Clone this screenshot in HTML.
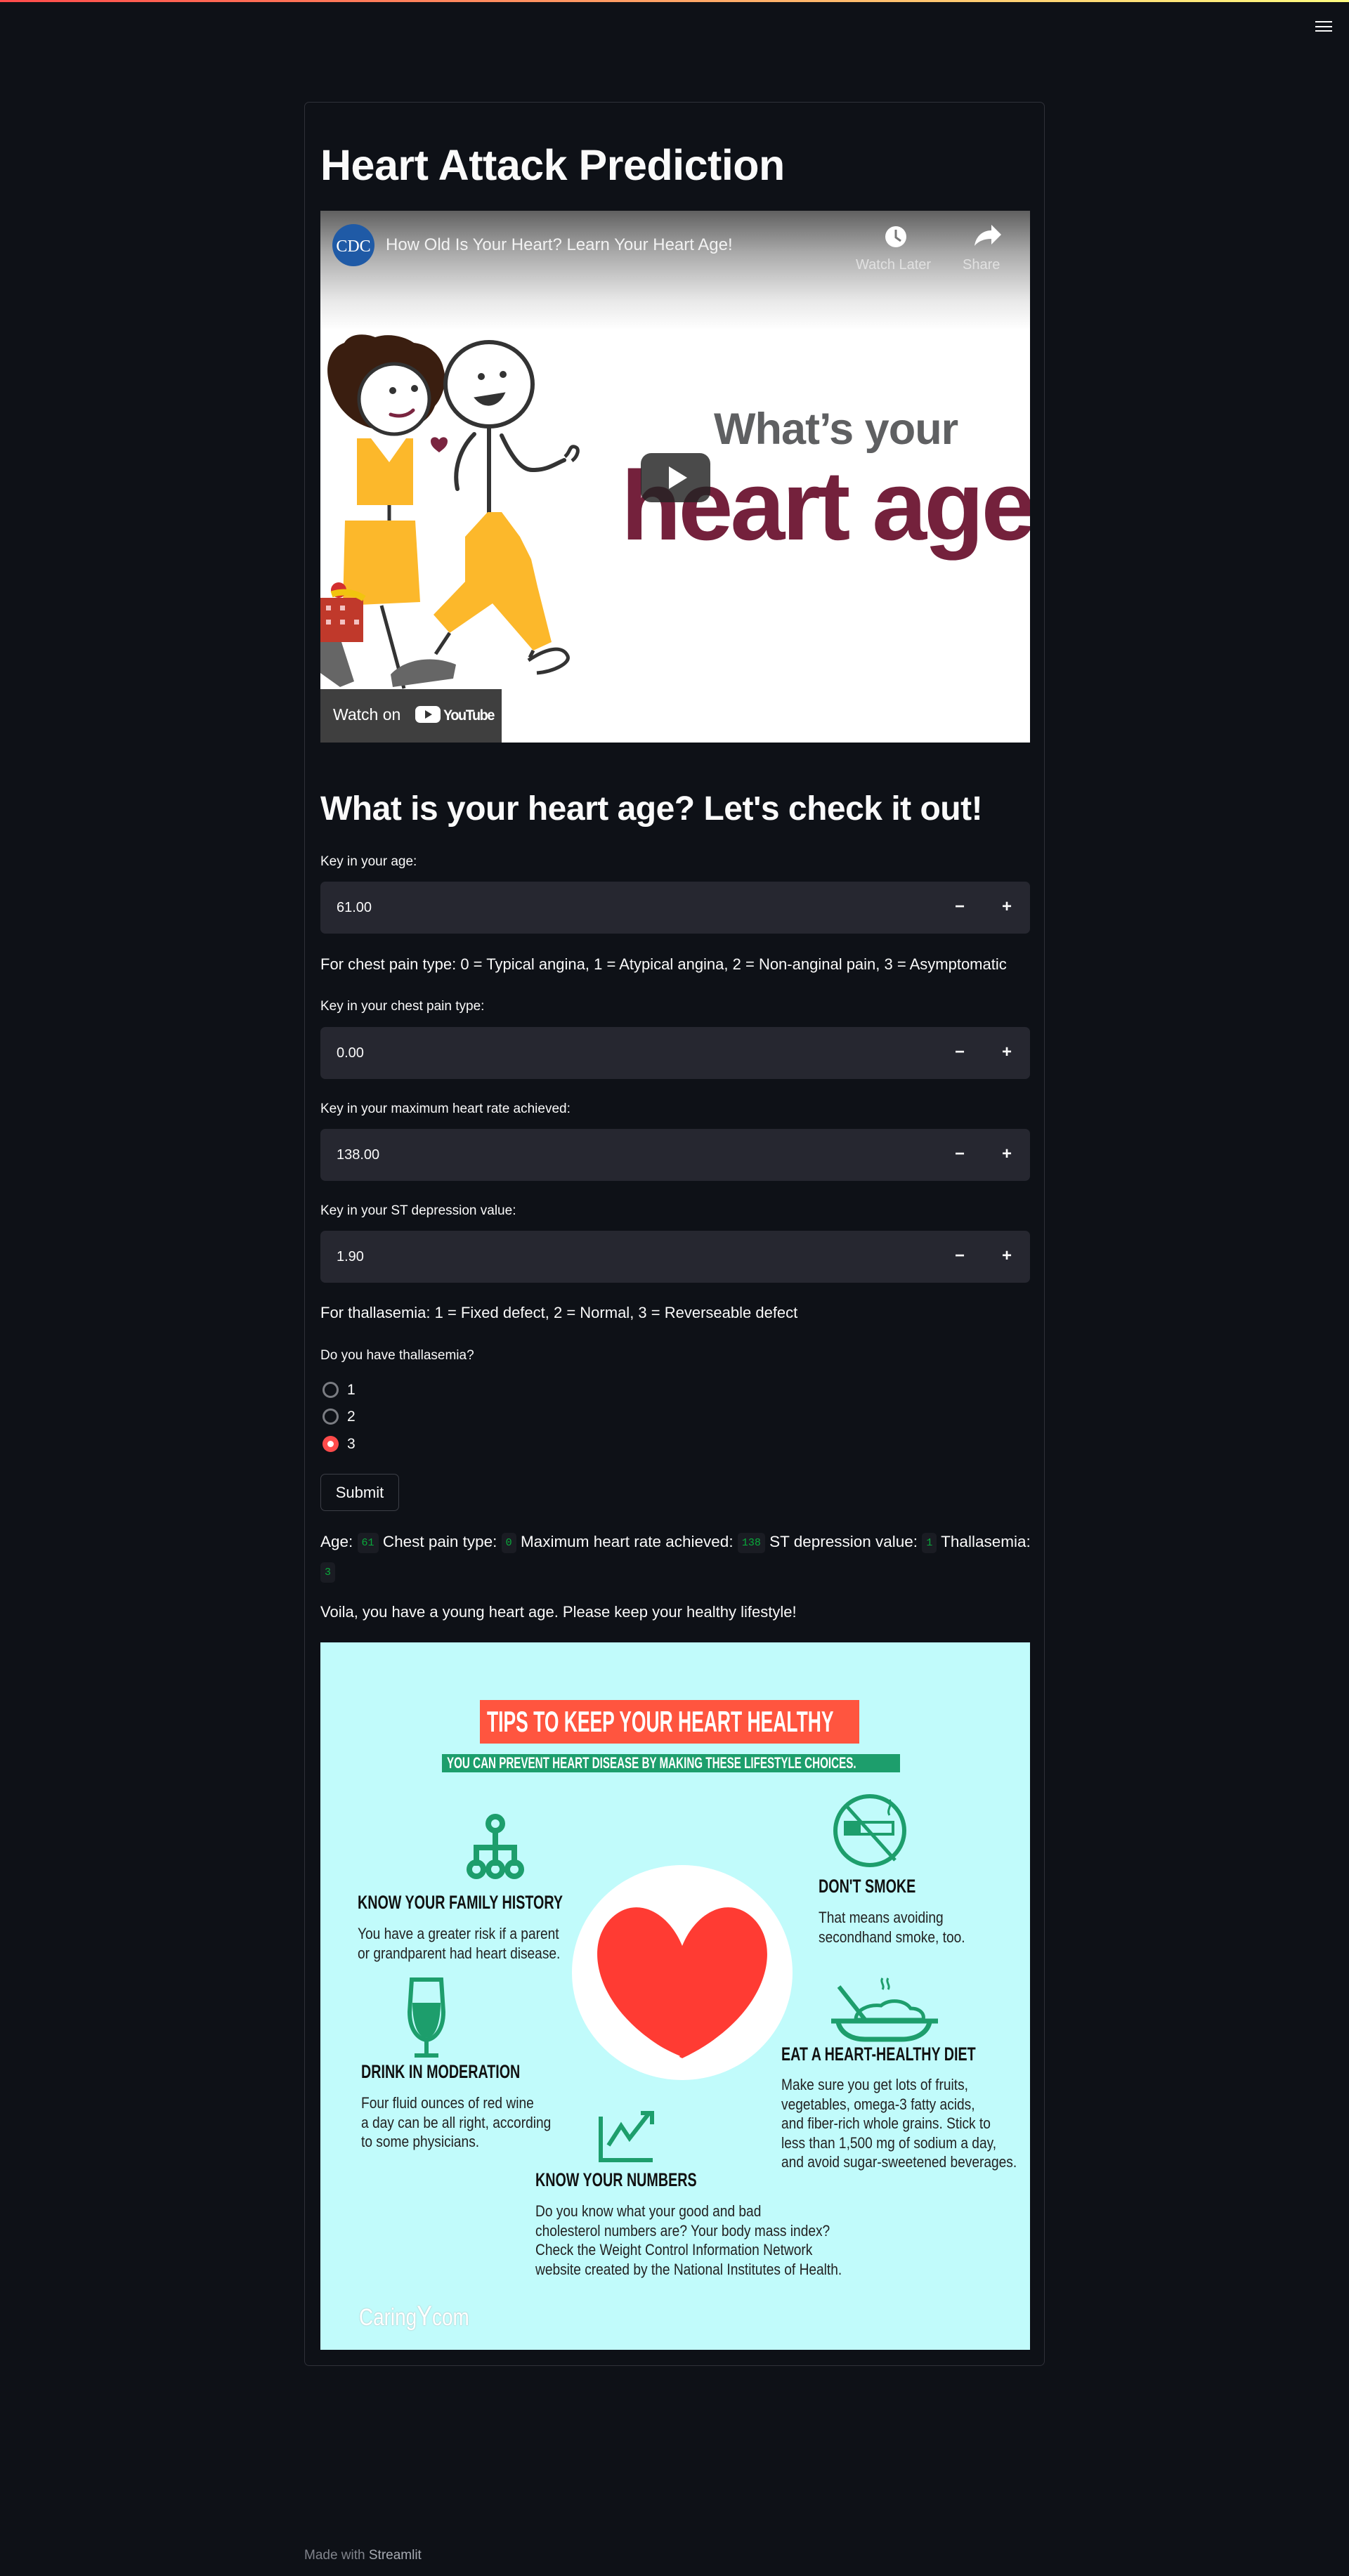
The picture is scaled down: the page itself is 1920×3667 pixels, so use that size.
<!DOCTYPE html>
<html><head><meta charset="utf-8">
<style>
*{margin:0;padding:0;box-sizing:border-box}
html,body{width:1920px;height:3667px;background:#0e1117;overflow:hidden}
body{position:relative;font-family:"Liberation Sans",sans-serif;color:#fafafa}
.a{position:absolute;white-space:nowrap}
.lbl{font-size:19px;color:#fafafa;line-height:24px}
.p{font-size:22px;line-height:28px}
.inp{position:absolute;left:456px;width:1010px;height:74px;background:#262730;border-radius:7px}
.inp .v{position:absolute;left:23px;top:0;line-height:74px;font-size:20px}
.inp .m,.inp .pl{position:absolute;top:0;line-height:72px;font-size:24px;font-weight:bold;width:40px;text-align:center}
.inp .m{left:890px}.inp .pl{left:957px}
.code{font-family:"Liberation Mono",monospace;font-size:15px;color:#09ab3b;background:#1a1c23;border-radius:5px;padding:6px 6px;vertical-align:2px}
.c{display:inline-block;transform-origin:0 0}
.ih{position:absolute;font-weight:bold;font-size:27px;line-height:27px;color:#111;white-space:nowrap}
.ih span{display:inline-block;transform:scaleX(0.73);transform-origin:0 0}
.it{position:absolute;font-size:22px;line-height:27.5px;color:#222;white-space:nowrap;transform:scaleX(0.87);transform-origin:0 0}
</style></head><body>
<div class="a" style="left:0;top:0;width:1920px;height:3px;background:linear-gradient(90deg,#ff4b4b,#fffd80)"></div>
<div class="a" style="left:1872px;top:30px;width:24px;height:2px;background:#fafafa"></div>
<div class="a" style="left:1872px;top:37px;width:24px;height:2px;background:#fafafa"></div>
<div class="a" style="left:1872px;top:43px;width:24px;height:2px;background:#fafafa"></div>

<div class="a" style="left:433px;top:145px;width:1054px;height:3223px;border:1px solid #2f3139;border-radius:7px"></div>

<div class="a" style="left:456px;top:200px;font-size:61px;font-weight:bold;letter-spacing:-0.5px">Heart Attack Prediction</div>

<!-- video -->
<div class="a" style="left:456px;top:300px;width:1010px;height:757px;background:#fff;overflow:hidden">
<div class="a" style="left:0;top:0;width:1010px;height:170px;background:linear-gradient(180deg,#606060 0%,#a9a9a9 35%,#e8e8e8 75%,#fff 100%)"></div>
<svg class="a" style="left:0;top:0" width="1010" height="757" viewBox="0 0 1010 757">
<circle cx="47" cy="49" r="30" fill="#1f5aa6"/>
<text x="47" y="58" text-anchor="middle" font-family="Liberation Serif" font-size="24" fill="#fff">CDC</text>
<circle cx="819" cy="37" r="15" fill="#fff"/><path d="M819 27v11l7 5" stroke="#777" stroke-width="3" fill="none"/>
<path d="M931 50c2-14 12-22 24-22v-8l14 14-14 14v-8c-10 0-18 3-24 10z" fill="#fff"/>
<!-- woman hair -->
<path d="M14 250c-10-30 0-55 20-62 8-14 30-14 44-8 18-6 40-2 55 8 20 2 38 16 42 36 6 18 0 40-12 54-8 22-30 34-60 34-40 4-78-20-89-62z" fill="#3a1e10"/>
<circle cx="105" cy="268" r="50" fill="#fff" stroke="#333" stroke-width="5"/>
<circle cx="103" cy="256" r="5" fill="#333"/><circle cx="134" cy="253" r="5" fill="#333"/>
<path d="M100 290c12 4 24 2 32-6" stroke="#7a2540" stroke-width="5" fill="none" stroke-linecap="round"/>
<!-- man head -->
<ellipse cx="240" cy="247" rx="62" ry="60" fill="#fff" stroke="#333" stroke-width="6"/>
<circle cx="229" cy="236" r="5" fill="#333"/><circle cx="260" cy="233" r="5" fill="#333"/>
<path d="M222 267c12 14 30 10 38-6z" stroke="#333" stroke-width="4" fill="#333"/>
<line x1="240" y1="307" x2="240" y2="430" stroke="#333" stroke-width="6"/>
<path d="M219 318c-20 20-30 50-24 78M258 320c14 30 28 50 45 49 20 0 30-8 44-14" stroke="#333" stroke-width="6" fill="none" stroke-linecap="round"/>
<path d="M348 350c8-6 6-16 14-14 8 2 4 14-4 20" stroke="#333" stroke-width="5" fill="none"/>
<path d="M169 344c-8-6-12-10-12-16 0-6 8-8 12-2 4-6 12-4 12 2 0 6-4 10-12 16z" fill="#7a2540"/>
<!-- woman dress -->
<path d="M52 324l20 0 26 34 24-34 10 0 0 95-80 0z" fill="#fcb82b"/>
<line x1="98" y1="419" x2="98" y2="441" stroke="#333" stroke-width="5"/>
<path d="M35 441l100 0 7 116-110 5z" fill="#fcb82b"/>
<path d="M87 562l32 118M55 562l-40 60" stroke="#333" stroke-width="5" fill="none"/>
<!-- man pants -->
<path d="M206 464l32-35 20 0 26 35 16 32 9 39 20 79-26 12-58-67-61 42-23-26 45-47z" fill="#fcb82b"/>
<path d="M184 601l-20 30M303 626l-5 10" stroke="#333" stroke-width="5"/>
<!-- basket -->
<rect x="0" y="551" width="61" height="63" fill="#c0392b"/>
<g fill="#f3c1c1"><rect x="8" y="562" width="7" height="7"/><rect x="28" y="562" width="7" height="7"/><rect x="8" y="582" width="7" height="7"/><rect x="28" y="582" width="7" height="7"/><rect x="48" y="582" width="7" height="7"/></g>
<circle cx="26" cy="540" r="11" fill="#d32f2f"/><path d="M16 546c18-6 34-2 46 6" stroke="#f1c40f" stroke-width="9" fill="none"/>
<!-- shoes -->
<path d="M0 614l30 0 18 56-20 8-28-20z" fill="#666"/>
<path d="M100 660c20-22 60-28 93-14l-4 20-86 12z" fill="#666"/>
<path d="M296 640c30-20 50-20 56-6 4 10-20 22-44 24" stroke="#333" stroke-width="5" fill="none"/>
<text x="560" y="332" font-family="Liberation Sans" font-weight="bold" font-size="63" fill="#5f6062" letter-spacing="-1">What’s your</text>
<text x="428" y="468" font-family="Liberation Sans" font-weight="bold" font-size="140" fill="#74213c" letter-spacing="-4">heart age</text>
<rect x="456" y="345" width="99" height="70" rx="15" fill="#222" opacity="0.82"/>
<path d="M496 364l26 16-26 16z" fill="#fff"/>
</svg>
<div class="a" style="left:0;top:681px;width:258px;height:76px;background:#3f3f3f"></div>
<div class="a" style="left:18px;top:681px;line-height:72px;font-size:23px;color:#fff">Watch on</div>
<svg class="a" style="left:135px;top:703px" width="120" height="28" viewBox="0 0 120 28"><rect x="0" y="2" width="36" height="24" rx="7" fill="#fff"/><path d="M14 8l10 6-10 6z" fill="#333"/><text x="40" y="22" font-family="Liberation Sans" font-weight="bold" font-size="21" fill="#fff" letter-spacing="-1.5" textLength="72" lengthAdjust="spacingAndGlyphs">YouTube</text></svg>
</div>
<div class="a" style="left:549px;top:335px;font-size:24px;color:#f2f2f2">How Old Is Your Heart? Learn Your Heart Age!</div>
<div class="a" style="left:1218px;top:366px;font-size:20px;color:#eee;opacity:.75">Watch Later</div>
<div class="a" style="left:1370px;top:366px;font-size:20px;color:#eee;opacity:.75">Share</div>

<div class="a" style="left:456px;top:1124px;font-size:48px;font-weight:bold;letter-spacing:-0.5px">What is your heart age? Let's check it out!</div>

<div class="a lbl" style="left:456px;top:1215px">Key in your age:</div>
<div class="inp" style="top:1255px"><div class="v">61.00</div><div class="m">−</div><div class="pl">+</div></div>
<div class="a p" style="left:456px;top:1359px">For chest pain type: 0 = Typical angina, 1 = Atypical angina, 2 = Non-anginal pain, 3 = Asymptomatic</div>
<div class="a lbl" style="left:456px;top:1421px">Key in your chest pain type:</div>
<div class="inp" style="top:1462px"><div class="v">0.00</div><div class="m">−</div><div class="pl">+</div></div>
<div class="a lbl" style="left:456px;top:1567px">Key in your maximum heart rate achieved:</div>
<div class="inp" style="top:1607px"><div class="v">138.00</div><div class="m">−</div><div class="pl">+</div></div>
<div class="a lbl" style="left:456px;top:1712px">Key in your ST depression value:</div>
<div class="inp" style="top:1752px"><div class="v">1.90</div><div class="m">−</div><div class="pl">+</div></div>
<div class="a p" style="left:456px;top:1855px">For thallasemia: 1 = Fixed defect, 2 = Normal, 3 = Reverseable defect</div>
<div class="a lbl" style="left:456px;top:1918px">Do you have thallasemia?</div>
<div class="a" style="left:459px;top:1967px;width:23px;height:23px;border:3px solid #7a7c82;border-radius:50%"></div>
<div class="a p" style="left:494px;top:1965px;font-size:21px">1</div>
<div class="a" style="left:459px;top:2005px;width:23px;height:23px;border:3px solid #7a7c82;border-radius:50%"></div>
<div class="a p" style="left:494px;top:2003px;font-size:21px">2</div>
<div class="a" style="left:459px;top:2044px;width:23px;height:23px;background:#ff4b4b;border-radius:50%"><div style="position:absolute;left:7px;top:7px;width:9px;height:9px;background:#fff;border-radius:50%"></div></div>
<div class="a p" style="left:494px;top:2042px;font-size:21px">3</div>
<div class="a" style="left:456px;top:2098px;width:112px;height:53px;border:1px solid #3d3f47;border-radius:7px;font-size:22px;line-height:51px;text-align:center">Submit</div>
<div class="a p" style="left:456px;top:2175px;width:1012px;white-space:normal;line-height:40px;font-size:22.5px">Age: <span class="code">61</span> Chest pain type: <span class="code">0</span> Maximum heart rate achieved: <span class="code">138</span> ST depression value: <span class="code">1</span> Thallasemia: <span class="code">3</span></div>
<div class="a p" style="left:456px;top:2281px">Voila, you have a young heart age. Please keep your healthy lifestyle!</div>

<!-- infographic -->
<div class="a" style="left:456px;top:2338px;width:1010px;height:1007px;background:#c1fbfb;overflow:hidden">
<div class="a" style="left:227px;top:82px;width:540px;height:62px;background:#ff553f"></div>
<div class="a" style="left:237px;top:92px;font-weight:bold;font-size:42px;line-height:42px;color:#fff"><span class="c" style="transform:scaleX(0.63)">TIPS TO KEEP YOUR HEART HEALTHY</span></div>
<div class="a" style="left:173px;top:159px;width:652px;height:26px;background:#1d9e6c"></div>
<div class="a" style="left:180px;top:161px;font-weight:bold;font-size:22px;line-height:22px;color:#fff"><span class="c" style="transform:scaleX(0.69)">YOU CAN PREVENT HEART DISEASE BY MAKING THESE LIFESTYLE CHOICES.</span></div>
<svg class="a" style="left:0;top:0" width="1010" height="1007" viewBox="0 0 1010 1007">
<g stroke="#1d9e6c" stroke-width="8" fill="none">
<circle cx="249" cy="258" r="10"/><path d="M249 268v22M222 318v-26h54v26M249 290v28"/>
<circle cx="222" cy="323" r="10"/><circle cx="249" cy="323" r="10"/><circle cx="276" cy="323" r="10"/>
<circle cx="782" cy="268" r="49" stroke-width="6"/><path d="M748 232l70 78" stroke-width="5"/>
<rect x="747" y="256" width="68" height="17" stroke-width="4"/>
<path d="M810 246c-5-8 5-14 0-22" stroke-width="3"/>
</g>
<rect x="747" y="256" width="22" height="17" fill="#1d9e6c"/>
<ellipse cx="515" cy="470" rx="157" ry="153" fill="#fff"/>
<path d="M515 432c-20-50-70-75-105-35-38 45-10 140 105 195 115-55 143-150 105-195-35-40-85-15-105 35z" fill="#ff3b33"/>
<path d="M396 410c-20 60 20 140 115 180" stroke="#fff" stroke-width="3" fill="none"/>
<!-- wine -->
<path d="M130 480h42l3 46c0 26-12 38-24 40-12-2-24-14-24-40z" fill="none" stroke="#1d9e6c" stroke-width="6"/>
<path d="M131 513h40c0 30-8 50-20 50-12 0-20-20-20-50z" fill="#1d9e6c"/>
<path d="M151 566v20M134 588h34" stroke="#1d9e6c" stroke-width="6"/>
<!-- bowl -->
<path d="M727 539h152M737 541c4 16 20 24 38 24h52c20 0 36-8 40-24" stroke="#1d9e6c" stroke-width="7" fill="none"/>
<path d="M762 537c0-14 18-22 36-20 12-10 34-8 42 4 14 0 20 8 18 16z" fill="none" stroke="#1d9e6c" stroke-width="5"/>
<path d="M738 490l38 48" stroke="#1d9e6c" stroke-width="6"/>
<path d="M800 478c-4 6 4 10 0 16M808 478c-4 6 4 10 0 16" stroke="#1d9e6c" stroke-width="3" fill="none"/>
<!-- chart -->
<path d="M399 675v62h74" stroke="#1d9e6c" stroke-width="6" fill="none"/>
<path d="M410 716l18-28 12 18 28-36" stroke="#1d9e6c" stroke-width="6" fill="none"/><path d="M456 670h16v16" stroke="#1d9e6c" stroke-width="6" fill="none"/>
</svg>
<div class="ih" style="left:53px;top:357px"><span>KNOW YOUR FAMILY HISTORY</span></div>
<div class="it" style="left:53px;top:401px">You have a greater risk if a parent<br>or grandparent had heart disease.</div>
<div class="ih" style="left:709px;top:334px"><span>DON'T SMOKE</span></div>
<div class="it" style="left:709px;top:378px">That means avoiding<br>secondhand smoke, too.</div>
<div class="ih" style="left:58px;top:598px"><span>DRINK IN MODERATION</span></div>
<div class="it" style="left:58px;top:642px">Four fluid ounces of red wine<br>a day can be all right, according<br>to some physicians.</div>
<div class="ih" style="left:656px;top:573px"><span>EAT A HEART-HEALTHY DIET</span></div>
<div class="it" style="left:656px;top:616px">Make sure you get lots of fruits,<br>vegetables, omega-3 fatty acids,<br>and fiber-rich whole grains. Stick to<br>less than 1,500 mg of sodium a day,<br>and avoid sugar-sweetened beverages.</div>
<div class="ih" style="left:306px;top:752px"><span>KNOW YOUR NUMBERS</span></div>
<div class="it" style="left:306px;top:796px">Do you know what your good and bad<br>cholesterol numbers are? Your body mass index?<br>Check the Weight Control Information Network<br>website created by the National Institutes of Health.</div>
<div class="a" style="left:55px;top:940px;font-size:34px;line-height:38px;color:#fff;text-shadow:0 0 2px #aaa"><span class="c" style="transform:scaleX(0.82)">Caring<span style="font-size:40px">Y</span>com</span></div>
</div>

<div class="a" style="left:433px;top:3627px;font-size:19px;color:#80838b">Made with <span style="color:#a6aab2">Streamlit</span></div>
</body></html>
